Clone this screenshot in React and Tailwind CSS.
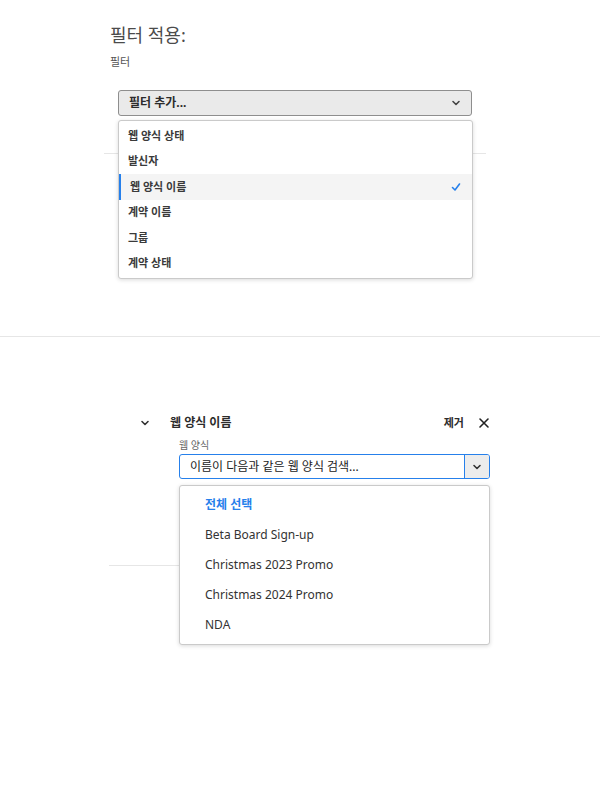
export default function App() {
  const f = { fontFamily: '"Noto Sans", "Noto Sans CJK KR", sans-serif' };
  const items = ["웹 양식 상태", "발신자", "웹 양식 이름", "계약 이름", "그룹", "계약 상태"];
  const forms = ["Beta Board Sign-up", "Christmas 2023 Promo", "Christmas 2024 Promo", "NDA"];
  const Chev = ({ c = "#444" }) => (
    <svg width="10" height="10" viewBox="0 0 10 10"><path d="M2 3.5 L5 6.5 L8 3.5" fill="none" stroke={c} strokeWidth="1.6" strokeLinecap="round" strokeLinejoin="round" /></svg>
  );
  return (
    <div className="w-[600px] h-[800px] bg-white relative overflow-hidden text-[#2c2c2c]" style={f}>
      <div className="h-[337px] border-b border-[#e6e6e6] relative">
        <div className="pl-[110px] pt-[22px]">
          <div className="text-[18px] leading-[26px] text-[#4b4b4b]">필터 적용:</div>
          <div className="text-[11px] leading-[16px] text-[#555] mt-[6px]">필터</div>
        </div>
        <div className="ml-[104px] w-[382px] mt-[20px] relative">
          <div className="mx-[14px] h-[26px] bg-[#eaeaea] border border-[#8e8e8e] rounded-[3px] flex items-center justify-between px-[10px]">
            <span className="text-[12px] font-bold">필터 추가...</span>
            <Chev />
          </div>
          <div className="border-t border-[#e6e6e6] mt-[37px]"></div>
          <div className="absolute left-[14px] top-[30px] w-[355px] bg-white border border-[#cacaca] rounded-[3px] shadow-[0_1px_4px_rgba(0,0,0,0.15)] py-[2px]">
            {items.map((t, i) => (
              <div key={t} className={`h-[25.5px] flex items-center justify-between pl-[9px] pr-[10px] text-[11px] font-bold text-[#3a3a3a] ${i === 2 ? "bg-[#f4f4f4] border-l-2 border-[#2680eb] pl-[7px]" : ""}`}>
                <span>{t}</span>
                {i === 2 && <svg width="12" height="12" viewBox="0 0 12 12"><path d="M2.5 6.5 L5 9 L9.5 3" fill="none" stroke="#2680eb" strokeWidth="1.6" strokeLinecap="round" strokeLinejoin="round" /></svg>}
              </div>
            ))}
          </div>
        </div>
      </div>
      <div className="pt-[76px] pl-[140px] pr-[110px]">
        <div className="flex items-center h-[20px]">
          <span className="w-[30px]"><Chev c="#333" /></span>
          <span className="text-[12px] font-bold flex-1">웹 양식 이름</span>
          <span className="text-[11px] font-bold mr-[14px]">제거</span>
          <svg width="12" height="12" viewBox="0 0 12 12"><path d="M2 2 L10 10 M10 2 L2 10" stroke="#222" strokeWidth="1.6" strokeLinecap="round" /></svg>
        </div>
        <div className="ml-[39px] relative">
          <div className="text-[10px] text-[#666] mt-[6px] leading-[12px]">웹 양식</div>
          <div className="mt-[3px] h-[25px] border border-[#2680eb] rounded-[3px] flex overflow-hidden">
            <div className="flex-1 flex items-center pl-[10px] text-[12px] text-[#222]">이름이 다음과 같은 웹 양식 검색...</div>
            <div className="w-[25px] bg-[#ececec] border-l border-[#2680eb] flex items-center justify-center"><Chev c="#333" /></div>
          </div>
          <div className="border-t border-[#e6e6e6] mt-[86px] -ml-[70px]"></div>
          <div className="absolute left-0 right-0 top-[46px] bg-white border border-[#cacaca] rounded-[3px] shadow-[0_1px_4px_rgba(0,0,0,0.15)] py-[4px]">
            <div className="h-[30px] flex items-center pl-[25px] text-[12px] font-bold text-[#2680eb]">전체 선택</div>
            {forms.map(t => (
              <div key={t} className="h-[30px] flex items-center pl-[25px] text-[12px] text-[#333]">{t}</div>
            ))}
          </div>
        </div>
      </div>
    </div>
  );
}
